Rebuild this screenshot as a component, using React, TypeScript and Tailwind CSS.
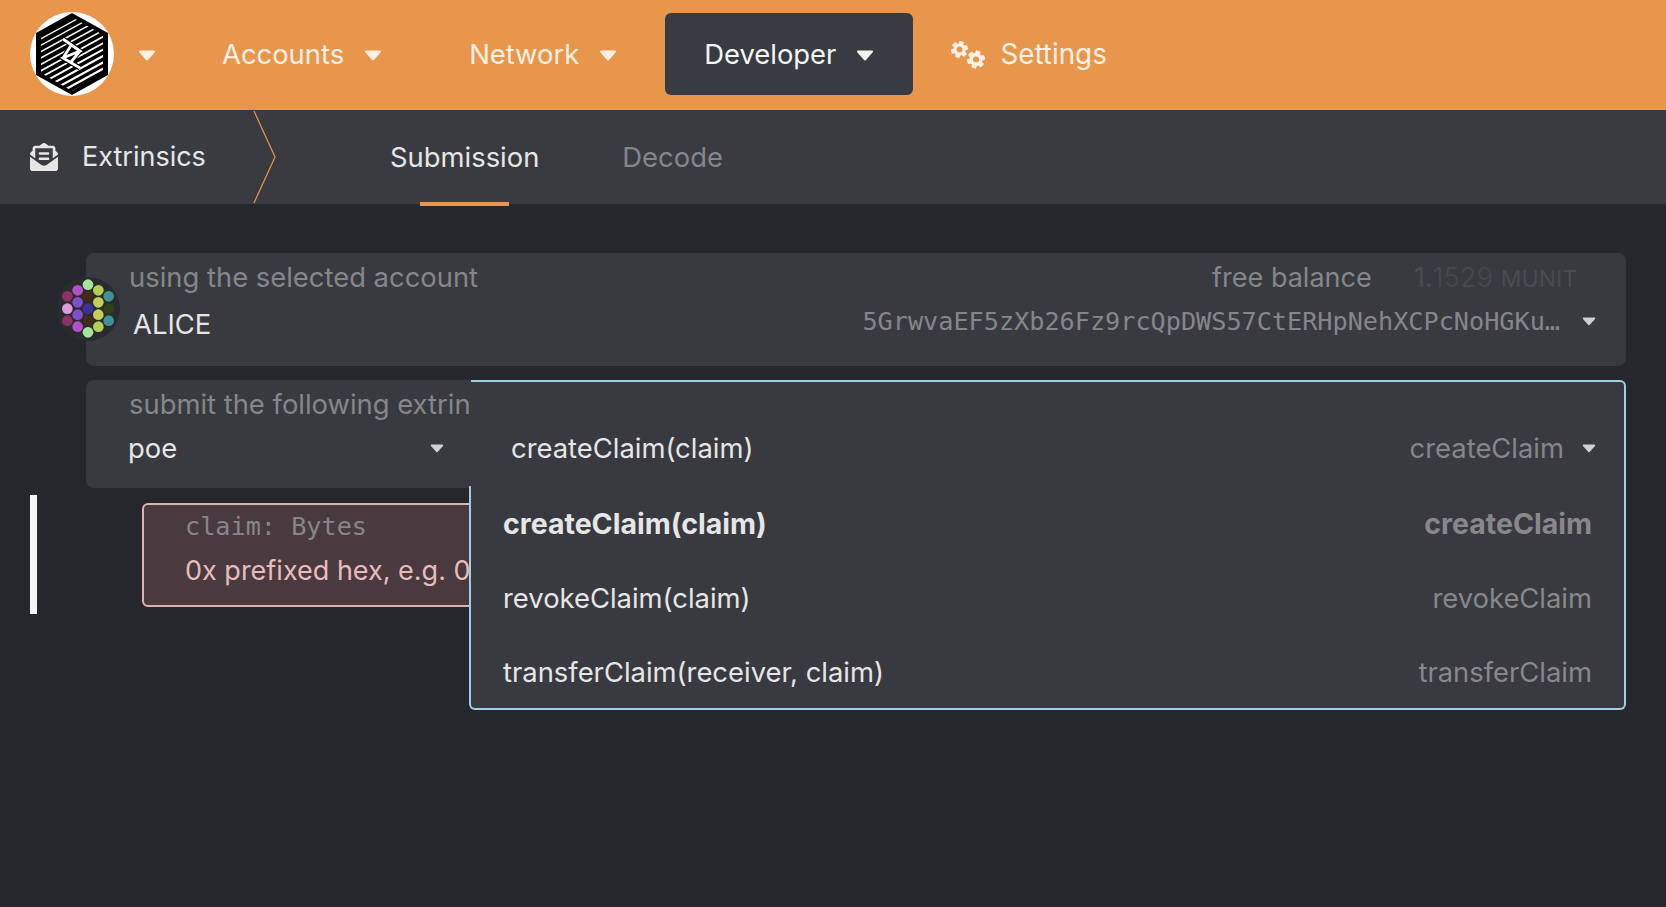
import React from "react";
import { FaEnvelopeOpenText } from "react-icons/fa";

function Caret({ className }: { className: string }) {
  return (
    <svg viewBox="0 0 18 11" className={className} fill="currentColor" stroke="currentColor" strokeWidth="2" strokeLinejoin="round">
      <path d="M2 1.5h14L9 9.5z" />
    </svg>
  );
}

function Logo() {
  const lines: number[] = [];
  for (let i = -8; i <= 11; i++) lines.push(i);
  const zig = "M33 27 L50 39 L33 46 L50 56 M42 32 L33 46 M50 39 L41 50";
  return (
    <svg viewBox="0 0 84 84" className="w-[84px] h-[84px] shrink-0 mb-[2px]">
      <defs>
        <clipPath id="hexClip">
          <path d="M42 5 L73 23 L73 61 L42 79 L11 61 L11 23 Z" />
        </clipPath>
      </defs>
      <circle cx="42" cy="42" r="42" fill="#fff" />
      <path d="M42 1 L78 21 L78 63 L42 83 L6 63 L6 21 Z" fill="#000" />
      <g clipPath="url(#hexClip)" stroke="#fff">
        {lines.map((i) => (
          <line key={i} strokeWidth={0.8 + ((i + 8) / 19) * 1.8} x1="0" x2="84" y1={52 + i * 6.4} y2={52 + i * 6.4 - 46} />
        ))}
      </g>
      <path d={zig} fill="none" stroke="#000" strokeWidth="5" />
      <path d={zig} fill="none" stroke="#fff" strokeWidth="2.8" />
    </svg>
  );
}

function Gear({ x, y, r }: { x: number; y: number; r: number }) {
  const angles = [0, 60, 120, 180, 240, 300];
  return (
    <g transform={`translate(${x} ${y})`}>
      <circle r={r * 0.72} fill="currentColor" />
      {angles.map((a) => (
        <rect key={a} x={-r * 0.28} y={-r} width={r * 0.56} height={r * 0.5} rx={r * 0.12} fill="currentColor" transform={`rotate(${a + 15})`} />
      ))}
      <circle r={r * 0.34} fill="#e8964b" />
    </g>
  );
}

function Cogs() {
  return (
    <svg viewBox="0 0 35 28" className="w-[35px] h-[28px] shrink-0 text-[#fdf1e5]">
      <Gear x={8.5} y={8.5} r={8.5} />
      <Gear x={25} y={18.5} r={9} />
    </svg>
  );
}

const dots: [number, number, string][] = [
  [144, 75, "#a8e39a"], [113, 92, "#b34fc9"], [175, 92, "#b3cf55"], [82, 110, "#8c3068"], [144, 110, "#452a18"],
  [206, 110, "#3e9298"], [113, 128, "#7f4fc9"], [175, 128, "#c3cf55"], [82, 147, "#dc9be0"], [144, 147, "#3f2f96"],
  [206, 147, "#2d4018"], [113, 165, "#7f4fc9"], [175, 165, "#c3cf55"], [82, 183, "#8c3068"], [144, 183, "#452a18"],
  [206, 183, "#3e9298"], [113, 201, "#b34fc9"], [175, 201, "#b3cf55"], [144, 218, "#a8e39a"],
];

function Identicon() {
  return (
    <svg viewBox="48 52 192 192" className="w-[64px] h-[64px]">
      <circle cx="144" cy="148" r="96" fill="#2a2b2e" />
      {dots.map(([x, y, c], i) => (
        <circle key={i} cx={x} cy={y} r="16" fill={c} />
      ))}
    </svg>
  );
}

function NavItem({ label, active }: { label: string; active?: boolean }) {
  return (
    <div className={`flex items-center gap-[20px] h-[82px] mb-[2px] pt-[2px] rounded-[6px] px-[39px] ${active ? "bg-[#393b42] text-[#f5f5f5]" : "text-[#fdf1e5]"}`}>
      <span>{label}</span>
      <Caret className="w-[18px] h-[11px]" />
    </div>
  );
}

function MenuRow({ left, right, bold }: { left: string; right: string; bold?: boolean }) {
  return (
    <div className={`flex items-center justify-between h-[74.3px] px-[32px] ${bold ? "font-bold text-[28.5px]" : ""}`}>
      <span className="text-[#e6e6e6]">{left}</span>
      <span className="text-[#88888a]">{right}</span>
    </div>
  );
}

export default function App() {
  return (
    <div className="min-h-[907px] bg-[#26272c] text-[27.4px] font-['Inter',sans-serif] overflow-hidden">
      <header className="h-[110px] bg-[#e8964b] flex items-center pl-[30px]">
        <Logo />
        <Caret className="w-[18px] h-[11px] ml-[24px] mr-[27px] text-[#fdf1e5]" />
        <NavItem label="Accounts" />
        <div className="w-[9px]" />
        <NavItem label="Network" />
        <div className="w-[9px]" />
        <NavItem label="Developer" active />
        <div className="flex items-center gap-[14px] ml-[38px] text-[#fdf1e5] text-[27.8px]">
          <Cogs />
          <span>Settings</span>
        </div>
      </header>

      <nav className="h-[94px] bg-[#393b41] flex items-center pl-[30px] relative">
        <FaEnvelopeOpenText className="w-[28px] h-[28px] text-[#e6e6e6]" />
        <span className="ml-[24px] text-[#e6e6e6] w-[173px] text-[27px]">Extrinsics</span>
        <svg viewBox="0 0 24 94" className="w-[24px] h-[94px] ml-[-2px] shrink-0" fill="none" stroke="#e8964b" strokeWidth="1.2">
          <path d="M1 1 L22 47 L1 93" />
        </svg>
        <div className="relative h-full flex items-center ml-[113px] text-[#e6e6e6]">
          <span className="mt-[2px]">Submission</span>
          <div className="absolute left-[30px] right-[30px] bottom-[-2px] h-[4px] bg-[#e8964b]" />
        </div>
        <span className="ml-[83px] mt-[2px] text-[#85868a]">Decode</span>
      </nav>

      <main className="pl-[30px] pr-[40px] pt-[49px] relative">
        <div className="ml-[56px] relative h-[113px] rounded-[8px] bg-[#393a40]">
          <div className="absolute left-[-30px] top-[24px]"><Identicon /></div>
          <div className="flex justify-between pl-[43px] pr-[49px] pt-[4px]">
            <span className="text-[#85868a]">using the selected account</span>
            <span className="text-[#85868a] flex items-baseline gap-[42px]">
              <span className="text-[27px]">free balance</span>
              <span className="text-[#4a4b50]">1.<span className="font-light text-[#47484d]">1529</span> <span className="text-[23px]">MUNIT</span></span>
            </span>
          </div>
          <div className="flex items-start justify-between pl-[47px] pr-[30px] mt-[5px]">
            <span className="text-[#e6e6e6]">ALICE</span>
            <span className="flex items-center gap-[22px] mt-[-1px]">
              <span className="font-['DejaVu_Sans_Mono',monospace] text-[25.2px] text-[#85868a]">5GrwvaEF5zXb26Fz9rcQpDWS57CtERHpNehXCPcNoHGKu…</span>
              <Caret className="w-[14px] h-[9px] text-[#d0d0d2]" />
            </span>
          </div>
        </div>

        <div className="ml-[56px] mt-[14px] relative h-[108px] rounded-[8px] bg-[#393a40]">
          <div className="pl-[43px] pt-[4px] text-[#85868a]">submit the following extrinsic</div>
          <div className="flex items-center justify-between pl-[42px] pr-[1182px] mt-[3px]">
            <span className="text-[#e6e6e6]">poe</span>
            <Caret className="w-[14px] h-[9px] text-[#d0d0d2]" />
          </div>

          <div className="absolute left-[385px] right-0 top-0 z-10 flex flex-col">
            <div className="h-[106px] pt-[31px] pl-[40px] pr-[28px] bg-[#393a40] border-t-2 border-r-2 border-[#9fcfe0] rounded-tr-[6px]">
              <div className="h-[72px] flex items-center justify-between">
                <span className="text-[#e6e6e6]">createClaim(claim)</span>
                <span className="flex items-center gap-[18px] text-[#85868a]">
                  createClaim
                  <Caret className="w-[14px] h-[9px] text-[#d0d0d2]" />
                </span>
              </div>
            </div>
            <div className="ml-[-2px] h-[224px] pt-[1px] bg-[#393a40] border-2 border-t-0 border-[#9fcfe0] rounded-b-[6px]">
              <MenuRow left="createClaim(claim)" right="createClaim" bold />
              <MenuRow left="revokeClaim(claim)" right="revokeClaim" />
              <MenuRow left="transferClaim(receiver, claim)" right="transferClaim" />
            </div>
          </div>
        </div>

        <div className="flex mt-[7px]">
          <div className="w-[7px] h-[119px] bg-[#f5f5f5] shrink-0" />
          <div className="ml-[105px] mt-[8px] w-full h-[104px] rounded-[6px] border-2 border-[#dfb3b3] bg-[#493a3f] pl-[41px] pt-[3px]">
            <div className="font-['DejaVu_Sans_Mono',monospace] text-[25.2px] text-[#85868a]">claim: Bytes</div>
            <div className="text-[#e8bcbc] text-[27px] mt-[5px]">0x prefixed hex, e.g. 0x1234</div>
          </div>
        </div>
      </main>
    </div>
  );
}
